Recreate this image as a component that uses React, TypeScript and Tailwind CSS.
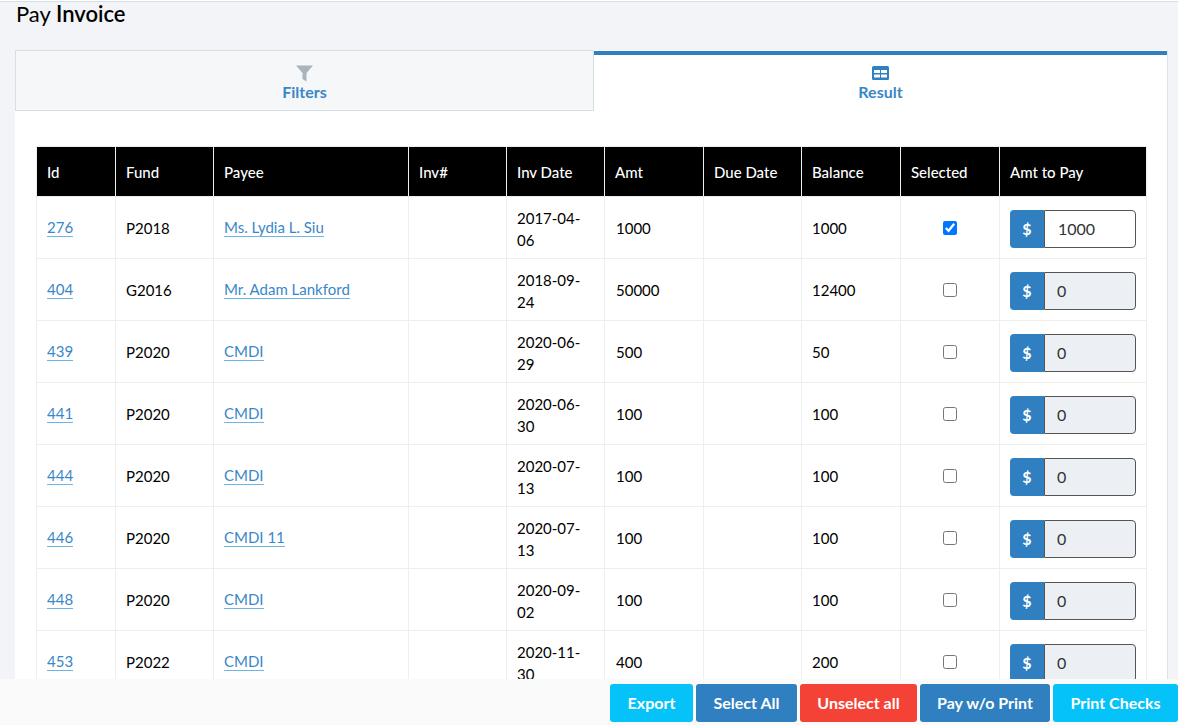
import React from 'react';

const rows = [
    { id: 276, fund: 'P2018', payee: 'Ms. Lydia L. Siu', date: ['2017-04-', '06'], amt: 1000, balance: 1000, selected: true, toPay: 1000 },
    { id: 404, fund: 'G2016', payee: 'Mr. Adam Lankford', date: ['2018-09-', '24'], amt: 50000, balance: 12400, selected: false, toPay: 0 },
    { id: 439, fund: 'P2020', payee: 'CMDI', date: ['2020-06-', '29'], amt: 500, balance: 50, selected: false, toPay: 0 },
    { id: 441, fund: 'P2020', payee: 'CMDI', date: ['2020-06-', '30'], amt: 100, balance: 100, selected: false, toPay: 0 },
    { id: 444, fund: 'P2020', payee: 'CMDI', date: ['2020-07-', '13'], amt: 100, balance: 100, selected: false, toPay: 0 },
    { id: 446, fund: 'P2020', payee: 'CMDI 11', date: ['2020-07-', '13'], amt: 100, balance: 100, selected: false, toPay: 0 },
    { id: 448, fund: 'P2020', payee: 'CMDI', date: ['2020-09-', '02'], amt: 100, balance: 100, selected: false, toPay: 0 },
    { id: 453, fund: 'P2022', payee: 'CMDI', date: ['2020-11-', '30'], amt: 400, balance: 200, selected: false, toPay: 0 },
];

const headers = [
    { label: 'Id', w: 'w-[79px]' },
    { label: 'Fund', w: 'w-[98px]' },
    { label: 'Payee', w: 'w-[195px]' },
    { label: 'Inv#', w: 'w-[98px]' },
    { label: 'Inv Date', w: 'w-[98px]' },
    { label: 'Amt', w: 'w-[99px]' },
    { label: 'Due Date', w: 'w-[98px]' },
    { label: 'Balance', w: 'w-[99px]' },
    { label: 'Selected', w: 'w-[99px]' },
    { label: 'Amt to Pay', w: 'w-[147px]' },
];

const linkCls = 'text-[#3a87c8] border-b border-[#6cb5e6] leading-[17px] inline-block';
const cellCls = 'border border-[#eeeeee] px-[10px] pt-[2px] pb-0 align-middle';
const linkCellCls = 'border border-[#eeeeee] px-[10px] py-0 align-middle';

const Funnel = () => (
    <svg width="17" height="17" viewBox="0 0 17 17" className="block">
        <path d="M0 0.5h17L10.5 8v8.5L6.5 14V8z" fill="#a9b4bb" />
    </svg>
);

const TableIcon = () => (
    <svg width="17" height="14" viewBox="0 0 17 14" className="block">
        <rect width="17" height="14" rx="1.5" fill="#2f7fc1" />
        <rect x="2" y="4" width="6" height="3" fill="#fff" />
        <rect x="9" y="4" width="6" height="3" fill="#fff" />
        <rect x="2" y="8.5" width="6" height="3" fill="#fff" />
        <rect x="9" y="8.5" width="6" height="3" fill="#fff" />
    </svg>
);

const App: React.FC = () => {
    return (
        <div className="relative h-[725px] w-[1178px] overflow-hidden bg-[#f2f4f8] font-['Lato','Liberation_Sans',sans-serif] text-[15px] text-black">
            <div className="h-px bg-white" />
            <div className="border-t border-[#d4dfe6]">
                <h1 className="pl-4 h-[48px] text-[22px] leading-[23px] font-normal">
                    Pay <span className="font-semibold">Invoice</span>
                </h1>

                <div className="ml-[15px] w-[1153px] bg-white border-r border-[#dbe4ea]">
                    {/* Tabs */}
                    <div className="flex h-[61px]">
                        <div className="w-[579px] bg-[#f6f7f9] border border-[#d4e0e7] flex flex-col items-center pt-[14px]">
                            <Funnel />
                            <span className="text-[#3a87c8] font-bold text-[16px] leading-[20px]">Filters</span>
                        </div>
                        <div className="flex-1 border-t-4 border-[#2f7fc1] mt-[1px] flex flex-col items-center pt-[11px]">
                            <TableIcon />
                            <span className="text-[#3a87c8] font-bold text-[16px] leading-[20px] mt-[2px]">Result</span>
                        </div>
                    </div>

                    <div className="pl-[21px] pt-[35px]">
                        <table className="table-fixed border-collapse w-[1110px]">
                            <thead>
                                <tr className="h-[50px] bg-black text-white">
                                    {headers.map((h) => (
                                        <th key={h.label} className={`${h.w} border border-[#eeeeee] px-[10px] pt-[2px] text-left font-medium text-[15px]`}>
                                            {h.label}
                                        </th>
                                    ))}
                                </tr>
                            </thead>
                            <tbody>
                                {rows.map((r) => (
                                    <tr key={r.id} className="h-[62px]">
                                        <td className={linkCellCls}><a className={linkCls}>{r.id}</a></td>
                                        <td className={cellCls}>{r.fund}</td>
                                        <td className={linkCellCls}><a className={linkCls}>{r.payee}</a></td>
                                        <td className={cellCls}></td>
                                        <td className={`${cellCls} leading-[22px]`}>
                                            {r.date[0]}
                                            <br />
                                            {r.date[1]}
                                        </td>
                                        <td className={`${cellCls} pl-[11px]`}>{r.amt}</td>
                                        <td className={cellCls}></td>
                                        <td className={cellCls}>{r.balance}</td>
                                        <td className="border border-[#eeeeee] px-[10px] text-center align-middle">
                                            <input type="checkbox" readOnly checked={r.selected} className="w-[14px] h-[14px] mt-[1px] block mx-auto accent-[#0075ff]" />
                                        </td>
                                        <td className={cellCls}>
                                            <div className="flex h-[38px] w-[126px]">
                                                <div className="w-[34px] bg-[#2f7fc1] rounded-l-[4px] text-white font-bold text-[16px] flex items-center justify-center">$</div>
                                                <div className={`flex-1 border border-[#555] rounded-r-[4px] flex items-center text-[16px] ${r.selected ? 'bg-white pl-[13px]' : 'bg-[#eceff3] pl-[12px]'} text-[#333]`}>
                                                    {r.toPay}
                                                </div>
                                            </div>
                                        </td>
                                    </tr>
                                ))}
                            </tbody>
                        </table>
                    </div>
                </div>
            </div>

            {/* Fixed action bar */}
            <div className="absolute left-0 right-0 top-[679px] h-[46px] bg-[#fafafa] flex justify-end items-start pt-[5px] gap-[3px] font-bold text-white text-[16px]">
                <button className="w-[83px] h-[38px] rounded-[3px] bg-[#05c3f9]">Export</button>
                <button className="w-[101px] h-[38px] rounded-[3px] bg-[#2f7fc1]">Select All</button>
                <button className="w-[117px] h-[38px] rounded-[3px] bg-[#f44336]">Unselect all</button>
                <button className="w-[130px] h-[38px] rounded-[3px] bg-[#2f7fc1]">Pay w/o Print</button>
                <button className="w-[125px] h-[38px] rounded-[3px] bg-[#05c3f9]">Print Checks</button>
            </div>
        </div>
    );
};

export default App;
